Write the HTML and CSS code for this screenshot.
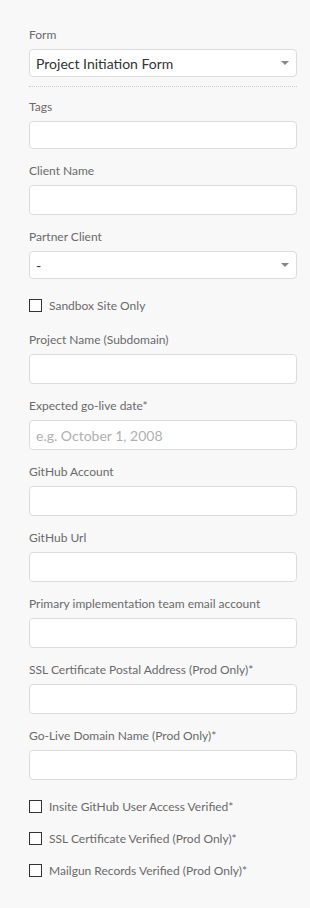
FILE: index.html
```html
<!DOCTYPE html>
<html lang="en">
<head>
    <meta charset="UTF-8">
    <title>Project Initiation Form</title>
    <link rel="stylesheet" href="styles.css">
</head>
<body>
    <div class="panel">
        <div class="field">
            <label for="form-type">Form</label>
            <div class="select-wrap">
                <select id="form-type" class="dark">
                    <option>Project Initiation Form</option>
                </select>
            </div>
        </div>
        <div class="divider"></div>

        <div class="field">
            <label for="tags">Tags</label>
            <input type="text" id="tags" class="short">
        </div>

        <div class="field">
            <label for="client-name">Client Name</label>
            <input type="text" id="client-name">
        </div>

        <div class="field">
            <label for="partner-client">Partner Client</label>
            <div class="select-wrap">
                <select id="partner-client" class="dark">
                    <option>-</option>
                </select>
            </div>
        </div>

        <label class="check sandbox"><input type="checkbox"> Sandbox Site Only</label>

        <div class="field">
            <label for="project-name">Project Name (Subdomain)</label>
            <input type="text" id="project-name">
        </div>

        <div class="field">
            <label for="go-live-date">Expected go-live date*</label>
            <input type="text" id="go-live-date" placeholder="e.g. October 1, 2008">
        </div>

        <div class="field">
            <label for="github-account">GitHub Account</label>
            <input type="text" id="github-account">
        </div>

        <div class="field">
            <label for="github-url">GitHub Url</label>
            <input type="text" id="github-url">
        </div>

        <div class="field">
            <label for="team-email">Primary implementation team email account</label>
            <input type="text" id="team-email">
        </div>

        <div class="field">
            <label for="ssl-address">SSL Certificate Postal Address (Prod Only)*</label>
            <input type="text" id="ssl-address">
        </div>

        <div class="field">
            <label for="go-live-domain">Go-Live Domain Name (Prod Only)*</label>
            <input type="text" id="go-live-domain">
        </div>

        <div class="checks">
            <label class="check"><input type="checkbox"> Insite GitHub User Access Verified*</label>
            <label class="check"><input type="checkbox"> SSL Certificate Verified (Prod Only)*</label>
            <label class="check"><input type="checkbox"> Mailgun Records Verified (Prod Only)*</label>
        </div>
    </div>
</body>
</html>
```

FILE: styles.css
```css
body {
    font-family: Lato, "Open Sans", sans-serif;
    margin: 0;
    padding: 0;
    background-color: #f8f8f8;
    color: #6a6a6a;
}

.panel {
    width: 268px;
    margin-left: 29px;
    padding-top: 27px;
}

.field {
    margin-bottom: 14px;
}

.field label {
    display: block;
    font-size: 12px;
    line-height: 16px;
    margin-bottom: 6px;
    color: #6a6a6a;
}

.field input, .field select {
    display: block;
    width: 100%;
    height: 30px;
    padding: 0 6px;
    border: 1px solid #dcdcdc;
    border-radius: 4px;
    background-color: #fff;
    box-sizing: border-box;
    font-family: inherit;
    font-size: 14px;
    color: #444;
    outline: none;
}

.field input.short {
    height: 28px;
}

.field input::placeholder {
    color: #b0b0b0;
}

.field select {
    height: 28px;
    appearance: none;
    -webkit-appearance: none;
}

.field select.dark {
    color: #333;
}

.select-wrap {
    position: relative;
}

.select-wrap::after {
    content: "";
    position: absolute;
    right: 8px;
    top: 12px;
    border-left: 4px solid transparent;
    border-right: 4px solid transparent;
    border-top: 4px solid #888;
}

.divider {
    border-top: 1px dotted #ccc;
    margin: -5px 0 12px;
}

.check {
    display: flex;
    align-items: center;
    height: 20px;
    margin-bottom: 12px;
    font-size: 12px;
    color: #6a6a6a;
}

.check input {
    appearance: none;
    -webkit-appearance: none;
    width: 13px;
    height: 13px;
    margin: 0 7px 0 0;
    border: 1px solid #333;
    background-color: #fff;
    box-sizing: border-box;
}

.sandbox {
    margin: 0 0 17px;
    padding-top: 2px;
}

.checks {
    padding-top: 2px;
}
```
